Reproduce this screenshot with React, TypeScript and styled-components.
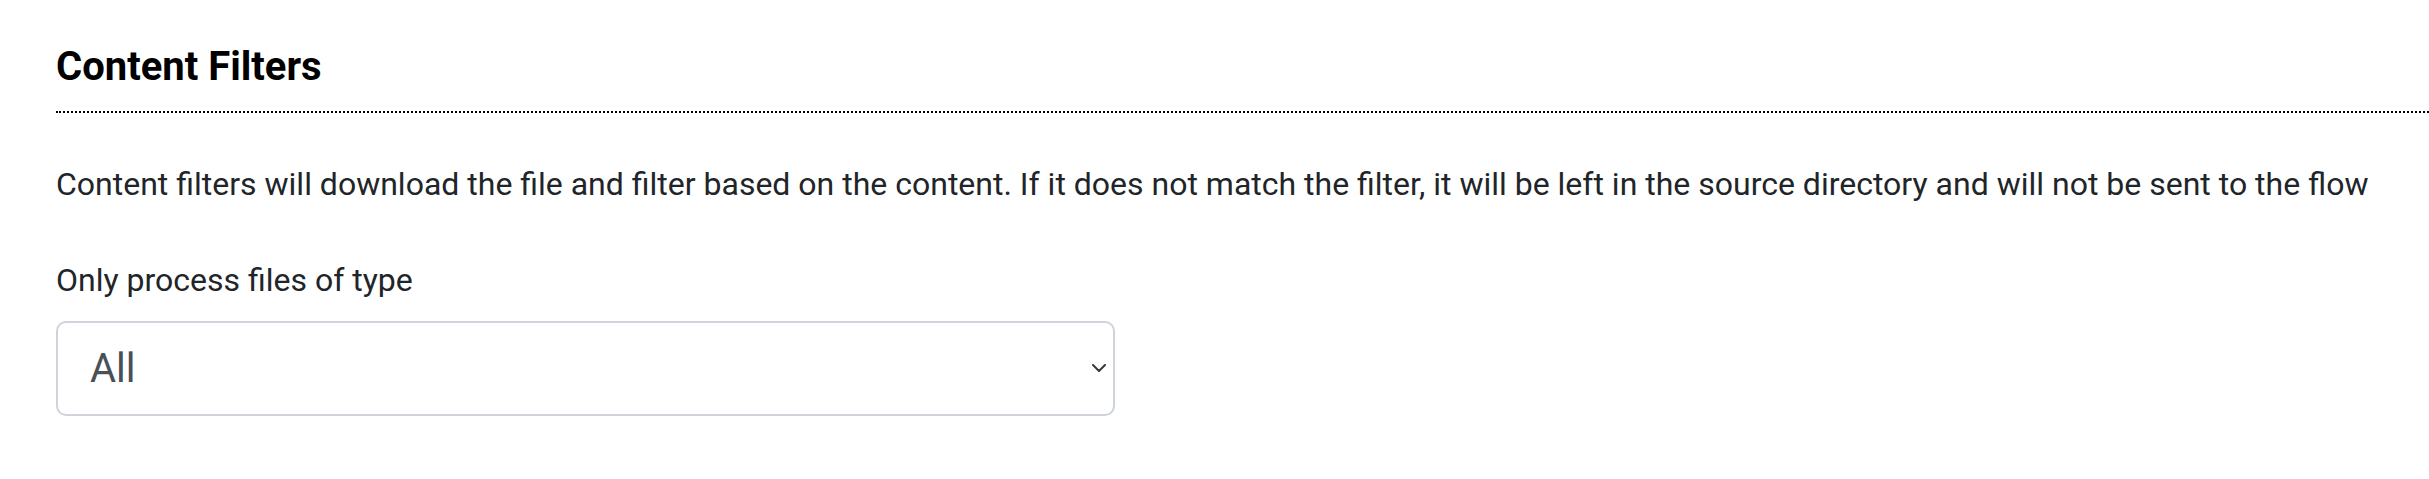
import styled, { createGlobalStyle } from "styled-components";

const GlobalStyle = createGlobalStyle`
  body {
    margin: 0;
    background: #ffffff;
    font-family: Roboto, "Liberation Sans", sans-serif;
  }
`;

const Page = styled.div`
  padding: 43px 0 0 56px;
`;

const SectionTitle = styled.h5`
  margin: 0;
  padding-bottom: 20px;
  border-bottom: 2px dotted #000000;
  font-size: 40px;
  line-height: 48px;
  font-weight: 700;
  color: #000000;
`;

const Description = styled.p`
  margin: 47px 0 0;
  font-size: 32px;
  line-height: 48px;
  color: #212529;
  white-space: nowrap;
`;

const FieldLabel = styled.label`
  display: block;
  margin-top: 48px;
  font-size: 32px;
  line-height: 48px;
  color: #212529;
`;

const SelectWrap = styled.div`
  position: relative;
  width: 1059px;
  margin-top: 17px;
`;

const Select = styled.select`
  appearance: none;
  display: block;
  width: 100%;
  height: 95px;
  padding: 0 60px 0 32px;
  border: 2px solid #ced4da;
  border-radius: 10px;
  background: #ffffff;
  font-family: Roboto, "Liberation Sans", sans-serif;
  font-size: 40px;
  color: #495057;
  outline: none;
`;

const Chevron = styled.svg`
  position: absolute;
  right: 9px;
  top: 43px;
  width: 14px;
  height: 8px;
  pointer-events: none;
`;

const App = () => (
  <>
    <GlobalStyle />
    <Page>
      <SectionTitle>Content Filters</SectionTitle>
      <Description>
        Content filters will download the file and filter based on the content. If it does not
        match the filter, it will be left in the source directory and will not be sent to the flow
      </Description>
      <FieldLabel htmlFor="contentType">Only process files of type</FieldLabel>
      <SelectWrap>
        <Select id="contentType" defaultValue="all">
          <option value="all">All</option>
          <option value="image">Images</option>
          <option value="video">Videos</option>
          <option value="document">Documents</option>
        </Select>
        <Chevron viewBox="0 0 14 8">
          <path
            d="M1 1l6 6 6-6"
            fill="none"
            stroke="#343a40"
            strokeWidth="2"
            strokeLinecap="round"
            strokeLinejoin="round"
          />
        </Chevron>
      </SelectWrap>
    </Page>
  </>
);

export default App;
